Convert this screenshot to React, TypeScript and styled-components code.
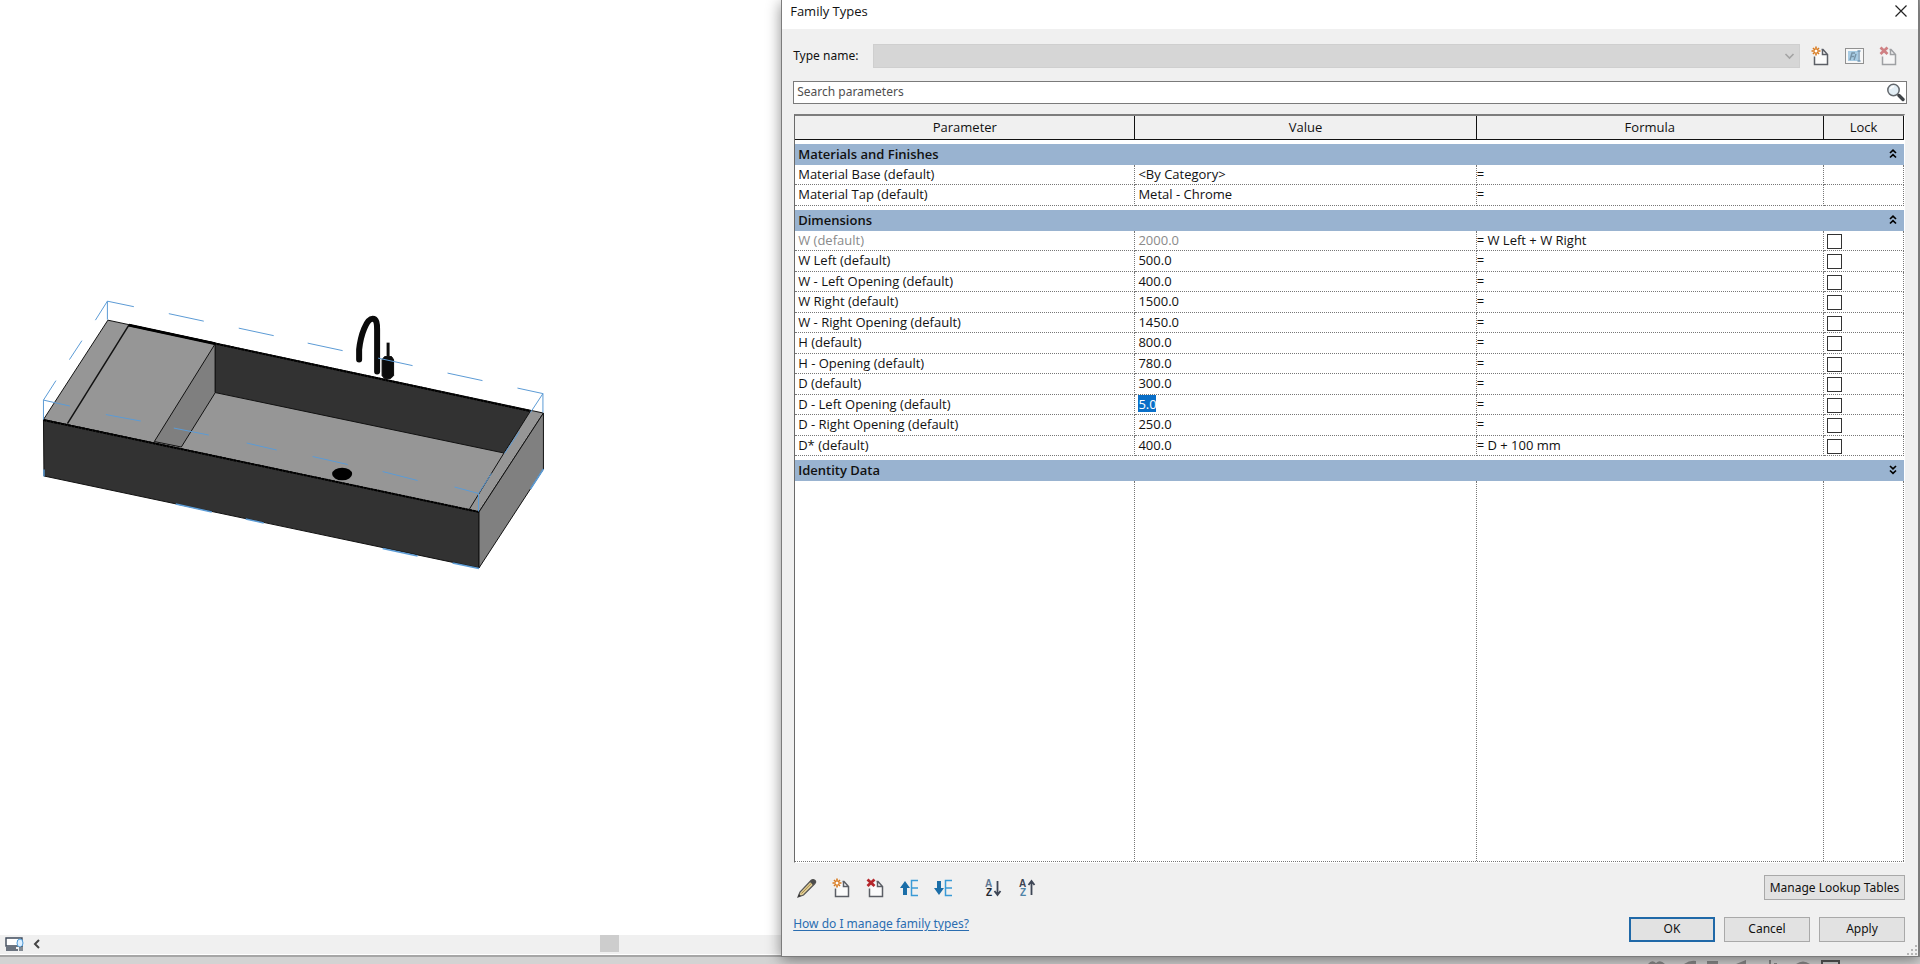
import React from "react";
import styled, { createGlobalStyle, css } from "styled-components";

const GlobalStyle = createGlobalStyle`
  *, *::before, *::after { box-sizing: border-box; }
  body {
    margin: 0;
    background: #fff;
    color: #111;
    font-family: "Open Sans", "Noto Sans", sans-serif;
    font-size: 13px;
    line-height: 18px;
  }
  button, input, select { font: inherit; color: inherit; }
`;

const dialogFont = css`
  font-family: "Noto Sans", "Open Sans", sans-serif;
  font-size: 12px;
  line-height: 16px;
`;

/* ---------- page shell ---------- */

const Page = styled.div`
  display: flex;
  flex-direction: column;
  height: 100vh;
  min-height: 640px;
  overflow: hidden;
`;

const Workspace = styled.div`
  flex: 1;
  display: flex;
  min-height: 0;
  padding-right: 1px;
  background: #9c9c9c;
`;

const Viewport = styled.main`
  flex: 782 1 0;
  display: flex;
  flex-direction: column;
  min-width: 0;
  background: #fff;
  border-bottom: 2px solid #a6a6a6;
`;

const Canvas = styled.div`
  flex: 1;
  min-height: 0;
  overflow: hidden;

  svg { display: block; width: 100%; }
`;

const ScrollStrip = styled.div`
  display: flex;
  align-items: center;
  height: 19px;
  margin-bottom: 1px;
  padding-left: 5px;
  gap: 8px;
  background: #f0f0f0;
`;

const StripButton = styled.button`
  display: flex;
  padding: 0 0 2px;
  border: 0;
  background: none;
`;

const ScrollTrack = styled.div`
  flex: 1;
  display: flex;
  align-self: stretch;
  padding-left: 71%;
`;

const ScrollThumb = styled.div`
  width: 19px;
  height: 17px;
  background: #cdcdcd;
`;

const StatusBar = styled.footer`
  display: flex;
  justify-content: flex-end;
  align-items: flex-end;
  height: 7px;
  padding-right: 80px;
  background: #d3d3d3;
`;

/* ---------- dialog ---------- */

const Dialog = styled.section`
  position: relative;
  flex: 1137 1 0;
  display: flex;
  flex-direction: column;
  min-width: 0;
  background: #f0f0f0;
  border: 1px solid #7c7c7c;
  border-top: 0;
  box-shadow: 0 3px 14px rgba(0, 0, 0, 0.45);
`;

const TitleBar = styled.header`
  display: flex;
  justify-content: space-between;
  align-items: flex-start;
  height: 29px;
  padding: 2px 9px 0 8px;
  background: #fff;
`;

const Title = styled.h1`
  margin: 0;
  font-size: 13px;
  font-weight: 400;
  line-height: 18px;
`;

const IconButton = styled.button`
  display: flex;
  align-items: center;
  justify-content: center;
  width: 20px;
  height: 20px;
  padding: 0;
  border: 0;
  background: none;

  &:disabled { opacity: 0.55; }

  svg { flex: none; }
`;

const CloseButton = styled(IconButton)`
  width: 16px;
  height: 18px;
`;

const DialogBody = styled.form`
  flex: 1;
  display: flex;
  flex-direction: column;
  min-height: 0;
  padding: 15px 11px 14px 11px;
`;

const TypeRow = styled.div`
  display: flex;
  align-items: center;
  height: 24px;
  padding-right: 9px;
`;

const TypeLabel = styled.label`
  ${dialogFont}
  width: 80px;
`;

const SelectBox = styled.div`
  position: relative;
  flex: 1;

  svg {
    position: absolute;
    top: 9px;
    right: 5px;
    pointer-events: none;
  }
`;

const TypeSelect = styled.select`
  display: block;
  width: 100%;
  height: 24px;
  appearance: none;
  border: 1px solid #c2c2c2;
  border-radius: 0;
  background: #cccccc;
`;

const TypeActions = styled.div`
  display: flex;
  gap: 14px;
  padding-left: 10px;
`;

const SearchBox = styled.div`
  display: flex;
  align-items: center;
  height: 23px;
  margin-top: 13px;
  padding-right: 1px;
  border: 1px solid #7a7a7a;
  background: #fff;
`;

const SearchInput = styled.input`
  ${dialogFont}
  flex: 1;
  min-width: 0;
  padding: 0 3px 2px;
  border: 0;
  outline: 0;
  background: none;

  &::placeholder { color: #4f4f4f; opacity: 1; }
`;

const GridPanel = styled.div`
  flex: 1;
  display: flex;
  flex-direction: column;
  min-height: 0;
  margin: 10px 2px 0 1px;
  border: 1px solid #fff;
  border-top: 2px solid #7d7d7d;
  border-left-color: #6a6a6a;
  background: #fff;
`;

const ParamTable = styled.table`
  flex: none;
  width: 100%;
  table-layout: fixed;
  border-collapse: separate;
  border-spacing: 0;
`;

const HeadCell = styled.th`
  height: 24px;
  padding: 0 0 1px;
  border-right: 1px solid #111;
  border-bottom: 1px solid #111;
  background: #f0f0f0;
  font-weight: 400;
`;

const GroupCell = styled.th`
  height: 25px;
  padding: 0;
  border-top: 4px solid #fff;
  background: #99b3d0;
  text-align: left;
`;

const GroupToggle = styled.button`
  display: flex;
  justify-content: space-between;
  align-items: center;
  width: 100%;
  height: 21px;
  padding: 0 6px 2px 3px;
  border: 0;
  background: none;
  font-size: 13px;
  line-height: 18px;
  font-weight: 600;
`;

const Row = styled.tr<{ $dim?: boolean }>`
  height: 20px;
  color: ${(p) => (p.$dim ? "#8a8a8a" : "#111")};

  &:nth-child(odd) { height: 21px; }
`;

const Cell = styled.td<{ $inset?: number }>`
  padding: 0 0 0 ${(p) => p.$inset ?? 3}px;
  border-right: 1px dotted #777;
  border-bottom: 1px dotted #777;
  vertical-align: top;
  white-space: nowrap;
  overflow: hidden;
`;

const FormulaCell = styled(Cell)`
  color: #111;
`;

const EmptyArea = styled.div`
  flex: 1;
  display: grid;
  grid-template-columns: 340fr 341fr 347fr 80fr;
  border-bottom: 1px dotted #777;
`;

const EmptyColumn = styled.span`
  border-right: 1px dotted #777;
`;

const EditInput = styled.input`
  display: block;
  width: 18px;
  height: 17px;
  padding: 0;
  border: 0;
  outline: 0;
  background: #0a6fc8;
  color: #fff;
`;

const LockBox = styled.input`
  display: block;
  width: 15px;
  height: 15px;
  margin: 3px 0 0;
  appearance: none;
  border: 1px solid #333;
  background: #fff;
`;

const ToolRow = styled.div`
  display: flex;
  justify-content: space-between;
  align-items: center;
  margin-top: 12px;
  padding: 0 2px 0 4px;
`;

const ToolGroup = styled.div`
  display: flex;
  align-items: center;
  gap: 14px;
`;

const ToolGap = styled.span`
  width: 2px;
`;

const FooterRow = styled.div`
  display: flex;
  justify-content: space-between;
  align-items: center;
  margin-top: 16px;
  padding-right: 2px;
`;

const HelpLink = styled.a`
  ${dialogFont}
  padding-bottom: 10px;
  color: #2a6db0;
  text-decoration: underline;
  text-underline-offset: 2px;
`;

const FooterButtons = styled.div`
  display: flex;
  gap: 9px;
`;

const PushButton = styled.button<{ $primary?: boolean; $wide?: boolean }>`
  ${dialogFont}
  width: ${(p) => (p.$wide ? 141 : 86)}px;
  height: 25px;
  padding: 0;
  border: ${(p) => (p.$primary ? "2px solid #2069a8" : "1px solid #a9a9a9")};
  background: #e2e2e2;
  white-space: nowrap;
`;

const Grip = styled.svg`
  position: absolute;
  right: 1px;
  bottom: 1px;
`;

/* ---------- icons ---------- */

const Star = () => (
  <g stroke="#d97a1e" strokeWidth="1.6">
    <path d="M5 0.500V9.500M0.500 5H9.500M2 2L8 8M8 2L2 8" />
    <circle cx="5" cy="5" r="1.500" fill="#fff" stroke="none" />
  </g>
);

const Sheet = () => (
  <path
    d="M3.500 10.500V18.500H16.500V8.500L12 3.500H10.500M11.500 3.500V8.500H16.500"
    fill="#fbfbfb"
    stroke="#5c5f66"
    strokeWidth="1.500"
  />
);

const NewIcon = () => (
  <svg width="18" height="20" viewBox="0 0 18 20" fill="none">
    <Sheet />
    <Star />
  </svg>
);

const DeleteIcon = () => (
  <svg width="18" height="20" viewBox="0 0 18 20" fill="none">
    <Sheet />
    <path d="M1.500 1.500L8.500 8M8.500 1.500L1.500 8" stroke="#b5262b" strokeWidth="2.800" />
  </svg>
);

const RenameIcon = () => (
  <svg width="19" height="16" viewBox="0 0 19 16" fill="none">
    <rect x="0.500" y="0.500" width="18" height="15" fill="#fff" stroke="#444" />
    <rect x="3" y="3" width="10" height="10" fill="#6fb0dc" />
    <path d="M5 12L7 5H10M6 8.500H9M9 12L11 6" stroke="#16486c" strokeWidth="1.400" />
    <path d="M12.500 3H15.500M14 3V13M12.500 13H15.500" stroke="#0f5186" strokeWidth="1.400" />
  </svg>
);

const SearchIcon = () => (
  <svg width="19" height="19" viewBox="0 0 19 19" fill="none">
    <circle cx="7.500" cy="7" r="5.700" fill="#e3eef5" stroke="#63686d" strokeWidth="1.500" />
    <path d="M4.500 6A3.500 3.500 0 0 1 8 3.500" stroke="#fff" strokeWidth="1.300" />
    <path d="M11.500 11L13 12.500" stroke="#777" strokeWidth="1.500" />
    <path d="M13 12.500L17 16.500" stroke="#3f4347" strokeWidth="3.400" strokeLinecap="round" />
  </svg>
);

const CloseIcon = () => (
  <svg width="12" height="12" viewBox="0 0 12 12" stroke="#222" strokeWidth="1.200">
    <path d="M0.500 0.500L11.500 11.500M11.500 0.500L0.500 11.500" />
  </svg>
);

const ChevronIcon = () => (
  <svg width="11" height="7" viewBox="0 0 11 7" fill="none" stroke="#a4a4a4" strokeWidth="1.600">
    <path d="M1.500 1L5.500 5L9.500 1" />
  </svg>
);

const DoubleChevron = ({ down }: { down?: boolean }) => (
  <svg width="10" height="10" viewBox="0 0 10 10" fill="none" stroke="#000" strokeWidth="1.700">
    <path d={down ? "M2 1L5 3.800L8 1M2 5.500L5 8.300L8 5.500" : "M2 4L5 1.200L8 4M2 8.500L5 5.700L8 8.500"} />
  </svg>
);

const PencilIcon = () => (
  <svg width="20" height="20" viewBox="0 0 20 20">
    <path d="M1 19L3 14L14 2.500Q16 0.500 18 2.500Q19.500 4 17.500 6L6.500 17Z" fill="#e3cf95" stroke="#555" strokeWidth="1.200" />
    <path d="M12.800 3.800L14.500 2Q16 0.800 17.800 2.300Q19.300 4 17.500 5.800L16 7.300Z" fill="#4c4c4c" />
    <path d="M4.500 15.500L14.500 5.200" stroke="#a58a4a" strokeWidth="1" />
    <path d="M1 19L2 16L4 18Z" fill="#333" />
  </svg>
);

const MoveIcon = ({ down }: { down?: boolean }) => (
  <svg width="20" height="20" viewBox="0 0 20 20" fill="none">
    <path
      d={down ? "M4 3H8V10H11L6 17L1 10H4Z" : "M4 17H8V10H11L6 3L1 10H4Z"}
      fill="#1b6ea8"
    />
    <path d="M19 2.500H12.500V17.500H19M12.500 10H19" stroke="#3a9ad6" strokeWidth="1.500" />
  </svg>
);

const SortIcon = ({ up }: { up?: boolean }) => (
  <svg
    width="20"
    height="24"
    viewBox="0 0 20 24"
    fontFamily="Liberation Sans, sans-serif"
    fontWeight="700"
    fontSize="10"
  >
    <text x="2" y="11" fill={up ? "#3c4250" : "#5f7894"} stroke="none">A</text>
    <text x="3" y="20" fill={up ? "#4f83a8" : "#22272f"} stroke="none">Z</text>
    <path
      d={up ? "M14.500 19V5M11.500 9L14.500 5L17.500 9" : "M14.500 5V18M11.500 15L14.500 19L17.500 15"}
      fill="none"
      stroke="#3e4656"
      strokeWidth="1.800"
    />
  </svg>
);

const DisplayIcon = () => (
  <svg width="19" height="14" viewBox="0 0 19 14" fill="none">
    <path d="M1 1H17V9H1Z" fill="#fff" stroke="#3f4a5a" strokeWidth="1.400" />
    <path d="M1 11H11M1 13H13" stroke="#3f4a5a" strokeWidth="1.300" />
    <ellipse cx="15" cy="6" rx="3" ry="4" fill="#dcefff" stroke="#4e9bd8" />
    <path d="M15 10V14M17 9V14" stroke="#4a5562" strokeWidth="1.300" />
  </svg>
);

const ScrollLeftIcon = () => (
  <svg width="9" height="10" viewBox="0 0 9 10" fill="none" stroke="#444" strokeWidth="2">
    <path d="M7 1L3 5L7 9" />
  </svg>
);

const StatusGlyphs = () => (
  <svg width="192" height="4" viewBox="0 0 192 4" fill="#8a8a8a">
    <path d="M0 4Q4 -1 8 3Q12 -1 17 4ZM36 4Q42 0 48 1V4ZM59 1H70V4H59ZM88 4L98 0V4ZM121 0H123V4H121ZM126 3H129V4H126ZM148 4Q155 -1 162 4Z" />
    <path d="M174 4V1H191V4" fill="none" stroke="#555" strokeWidth="2" />
  </svg>
);

/* ---------- model drawing ---------- */

const SinkModel = () => (
  <svg viewBox="0 0 782 935" role="img" aria-label="3D view of the sink family" fill="none">
    <g stroke="#111" strokeWidth="1" strokeLinejoin="round">
      <path d="M108 320.500L544 413.500L479.500 512.500L43.500 420Z" fill="#969696" />
      <path d="M43.500 420L479.500 512.500V568.500L44 476.500Z" fill="#323232" />
      <path d="M479.500 512.500L544 413.500V469.500L479.500 568.500Z" fill="#808080" />
      <path d="M215.500 344L154.500 442L181.500 447.500L215.500 393Z" fill="#7f7f7f" />
      <path d="M215.500 344L531 411.500L504.500 453.500L215.500 393Z" fill="#323232" />
      <path d="M504.500 453.500L470 509.500" />
      <path d="M129 325.500L67.500 424" strokeWidth="1.500" />
    </g>
    <g stroke="#000" strokeWidth="2">
      <path d="M43.500 420.500L479.500 512.500" strokeDasharray="3 0.600" />
      <path d="M129 325.500L531 411.500" strokeDasharray="3 0.600" />
    </g>
    <path d="M129 325.500L215 344" stroke="#000" strokeWidth="3" />
    <ellipse cx="342.500" cy="474.500" rx="10" ry="6.300" fill="#000" />
    <g stroke="#0b0b0b">
      <path d="M359.500 360V350C361 335 367 319 373 319C377 319 377.500 324 377.500 330V372" strokeWidth="6" strokeLinecap="round" />
      <path d="M388.500 343V357" strokeWidth="3" />
      <path d="M385 357H392L394 360V376L391 379H385L382.500 376V360Z" fill="#0b0b0b" />
    </g>
    <g stroke="#5b9bd5" strokeWidth="1">
      <path d="M107.500 320V301.500L134 307M169 314L204 321.500M239 328.500L274 336M308 343.500L343 351M378.500 358.500L413 366M448 373.500L483 381M518 388.500L543.500 394V413" />
      <path d="M107.500 301.500L95.500 320.500M82 341L69.500 360M56 381L43.500 400.500" />
      <path d="M43.500 420V400.500L70 406.500M106 415L141 421.500M174 428.500L209 435.500M247 443.500L277 450.500M313 457L348 465M383 472L418 481M455 487.500L479 494V512" />
      <path d="M543.500 394L531 413M520 432L505 454M492 474L479 494" />
      <path d="M44 470V477M176 504.500L212 512.500M246 519.500L264 523.500M383 549L418 556.500M453 563.500L479.500 569M544 469.500L531 489.500" strokeWidth="1.500" />
    </g>
  </svg>
);

/* ---------- data ---------- */

type Param = {
  name: string;
  value: string;
  formula?: string;
  lockable?: boolean;
  dim?: boolean;
  editing?: boolean;
};

type Group = { title: string; collapsed?: boolean; params: Param[] };

const dimension = (name: string, value: string, extra: Partial<Param> = {}): Param => ({
  name: `${name} (default)`,
  value,
  lockable: true,
  ...extra,
});

const groups: Group[] = [
  {
    title: "Materials and Finishes",
    params: [
      { name: "Material Base (default)", value: "<By Category>" },
      { name: "Material Tap (default)", value: "Metal - Chrome" },
    ],
  },
  {
    title: "Dimensions",
    params: [
      dimension("W", "2000.0", { formula: "W Left + W Right", dim: true }),
      dimension("W Left", "500.0"),
      dimension("W - Left Opening", "400.0"),
      dimension("W Right", "1500.0"),
      dimension("W - Right Opening", "1450.0"),
      dimension("H", "800.0"),
      dimension("H - Opening", "780.0"),
      dimension("D", "300.0"),
      dimension("D - Left Opening", "5.0", { editing: true }),
      dimension("D - Right Opening", "250.0"),
      dimension("D*", "400.0", { formula: "D + 100 mm" }),
    ],
  },
  { title: "Identity Data", collapsed: true, params: [] },
];

const ParamRow = ({ param }: { param: Param }) => (
  <Row $dim={param.dim}>
    <Cell>{param.name}</Cell>
    <Cell>
      {param.editing ? (
        <EditInput aria-label={param.name} defaultValue={param.value} />
      ) : (
        param.value
      )}
    </Cell>
    <FormulaCell $inset={0}>= {param.formula}</FormulaCell>
    <Cell>
      {param.lockable && <LockBox type="checkbox" aria-label={`Lock ${param.name}`} />}
    </Cell>
  </Row>
);

export default function App() {
  return (
    <>
      <GlobalStyle />
      <Page>
        <Workspace>
          <Viewport>
            <Canvas>
              <SinkModel />
            </Canvas>
            <ScrollStrip>
              <StripButton type="button" aria-label="View display">
                <DisplayIcon />
              </StripButton>
              <StripButton type="button" aria-label="Scroll left">
                <ScrollLeftIcon />
              </StripButton>
              <ScrollTrack>
                <ScrollThumb />
              </ScrollTrack>
            </ScrollStrip>
          </Viewport>

          <Dialog role="dialog" aria-labelledby="dialog-title">
            <TitleBar>
              <Title id="dialog-title">Family Types</Title>
              <CloseButton type="button" aria-label="Close">
                <CloseIcon />
              </CloseButton>
            </TitleBar>
            <DialogBody onSubmit={(e) => e.preventDefault()}>
              <TypeRow>
                <TypeLabel htmlFor="type-name">Type name:</TypeLabel>
                <SelectBox>
                  <TypeSelect id="type-name" disabled />
                  <ChevronIcon />
                </SelectBox>
                <TypeActions>
                  <IconButton type="button" aria-label="New type">
                    <NewIcon />
                  </IconButton>
                  <IconButton type="button" aria-label="Rename type" disabled>
                    <RenameIcon />
                  </IconButton>
                  <IconButton type="button" aria-label="Delete type" disabled>
                    <DeleteIcon />
                  </IconButton>
                </TypeActions>
              </TypeRow>

              <SearchBox>
                <SearchInput aria-label="Search parameters" placeholder="Search parameters" />
                <IconButton type="button" aria-label="Search">
                  <SearchIcon />
                </IconButton>
              </SearchBox>

              <GridPanel>
                <ParamTable>
                  <colgroup>
                    <col width="340" />
                    <col width="341" />
                    <col width="347" />
                    <col width="80" />
                  </colgroup>
                  <thead>
                    <tr>
                      <HeadCell scope="col">Parameter</HeadCell>
                      <HeadCell scope="col">Value</HeadCell>
                      <HeadCell scope="col">Formula</HeadCell>
                      <HeadCell scope="col">Lock</HeadCell>
                    </tr>
                  </thead>
                  {groups.map((group) => (
                    <tbody key={group.title}>
                      <tr>
                        <GroupCell colSpan={4} scope="rowgroup">
                          <GroupToggle type="button" aria-expanded={!group.collapsed}>
                            {group.title}
                            <DoubleChevron down={group.collapsed} />
                          </GroupToggle>
                        </GroupCell>
                      </tr>
                      {group.params.map((param) => (
                        <ParamRow key={param.name} param={param} />
                      ))}
                    </tbody>
                  ))}
                </ParamTable>
                <EmptyArea aria-hidden="true">
                  <EmptyColumn />
                  <EmptyColumn />
                  <EmptyColumn />
                  <EmptyColumn />
                </EmptyArea>
              </GridPanel>

              <ToolRow>
                <ToolGroup>
                  <IconButton type="button" aria-label="Edit parameter">
                    <PencilIcon />
                  </IconButton>
                  <IconButton type="button" aria-label="New parameter">
                    <NewIcon />
                  </IconButton>
                  <IconButton type="button" aria-label="Delete parameter">
                    <DeleteIcon />
                  </IconButton>
                  <IconButton type="button" aria-label="Move up">
                    <MoveIcon />
                  </IconButton>
                  <IconButton type="button" aria-label="Move down">
                    <MoveIcon down />
                  </IconButton>
                  <ToolGap />
                  <IconButton type="button" aria-label="Sort ascending">
                    <SortIcon />
                  </IconButton>
                  <IconButton type="button" aria-label="Sort descending">
                    <SortIcon up />
                  </IconButton>
                </ToolGroup>
                <PushButton type="button" $wide>
                  Manage Lookup Tables
                </PushButton>
              </ToolRow>

              <FooterRow>
                <HelpLink href="#help">How do I manage family types?</HelpLink>
                <FooterButtons>
                  <PushButton type="submit" $primary>
                    OK
                  </PushButton>
                  <PushButton type="button">Cancel</PushButton>
                  <PushButton type="button">Apply</PushButton>
                </FooterButtons>
              </FooterRow>
            </DialogBody>
            <Grip width="10" height="10" viewBox="0 0 10 10" fill="#b5b5b5" aria-hidden="true">
              <path d="M8 0H10V2H8ZM4 4H6V6H4ZM8 4H10V6H8ZM0 8H2V10H0ZM4 8H6V10H4ZM8 8H10V10H8Z" />
            </Grip>
          </Dialog>
        </Workspace>
        <StatusBar>
          <StatusGlyphs />
        </StatusBar>
      </Page>
    </>
  );
}
